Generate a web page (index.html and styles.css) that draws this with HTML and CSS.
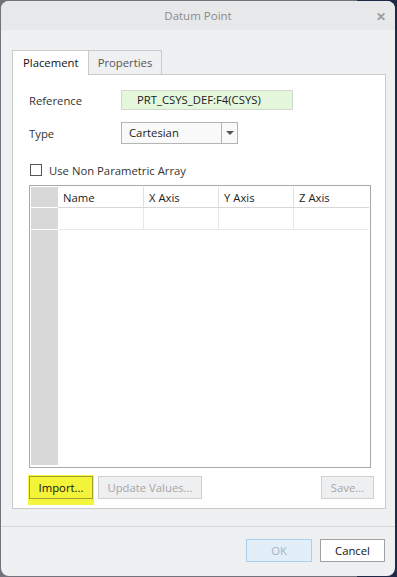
FILE: index.html
```html
<!DOCTYPE html>
<html>
<head>
    <title>Datum Point</title>
    <link rel="stylesheet" href="styles.css">
</head>
<body>
    <div class="window">
        <div class="titlebar">
            <span class="title">Datum Point</span>
            <span class="close">&#x2715;</span>
        </div>

        <div class="content">
            <div class="tabs">
                <div class="tab active">Placement</div>
                <div class="tab">Properties</div>
            </div>

            <div class="panel">
                <div class="form-row">
                    <label>Reference</label>
                    <div class="ref-field">PRT_CSYS_DEF:F4(CSYS)</div>
                </div>
                <div class="form-row type-row">
                    <label>Type</label>
                    <div class="select">
                        <span class="select-value">Cartesian</span>
                        <span class="select-arrow"></span>
                    </div>
                </div>
                <div class="check-row">
                    <span class="checkbox"></span>
                    <span>Use Non Parametric Array</span>
                </div>

                <div class="table">
                    <div class="gutter head"></div>
                    <div class="cell head">Name</div>
                    <div class="cell head">X Axis</div>
                    <div class="cell head">Y Axis</div>
                    <div class="cell head last">Z Axis</div>

                    <div class="gutter"></div>
                    <div class="cell"></div>
                    <div class="cell"></div>
                    <div class="cell"></div>
                    <div class="cell last"></div>

                    <div class="gutter rest"></div>
                    <div class="cell rest wide"></div>
                </div>

                <div class="table-actions">
                    <div class="highlight">
                        <button class="btn">Import...</button>
                    </div>
                    <button class="btn disabled">Update Values...</button>
                    <button class="btn disabled save">Save...</button>
                </div>
            </div>
        </div>

        <div class="footer">
            <button class="btn ok">OK</button>
            <button class="btn cancel">Cancel</button>
        </div>
    </div>
</body>
</html>
```

FILE: styles.css
```css
body {
    margin: 0;
    padding: 0;
    background: linear-gradient(to right, #70747a 0, #70747a 90%, #1e2a45 90%);
    font-family: "Open Sans", "Noto Sans", Arial, sans-serif;
    font-size: 11.3px;
    color: #222;
    overflow: hidden;
}

.window {
    box-sizing: border-box;
    width: 394px;
    height: 575px;
    margin: 1px 2px 1px 1px;
    background-color: #eff0f2;
    border-radius: 8px;
    display: flex;
    flex-direction: column;
    overflow: hidden;
}

.titlebar {
    height: 29px;
    flex-shrink: 0;
    background-color: #e7e8ea;
    display: flex;
    align-items: center;
    justify-content: center;
    position: relative;
}

.title {
    color: #8a8a8a;
    font-size: 11.5px;
}

.close {
    position: absolute;
    right: 9px;
    top: 7px;
    font-size: 12px;
    font-weight: bold;
    color: #9a9a9a;
}

.content {
    padding: 20px 9px 0 11px;
}

.tabs {
    display: flex;
    height: 24px;
}

.tab {
    box-sizing: border-box;
    height: 24px;
    width: 74px;
    text-align: center;
    line-height: 23px;
    border: 1px solid #cacaca;
    border-bottom: none;
    color: #555;
    background-color: #eff0f2;
    white-space: nowrap;
}

.tab.active {
    width: 76px;
    text-align: left;
    padding-left: 10px;
    color: #111;
    background-color: #fff;
    border-right: none;
    height: 25px;
    position: relative;
    z-index: 1;
}

.panel {
    box-sizing: border-box;
    height: 435px;
    background-color: #fff;
    border: 1px solid #cacaca;
    padding: 15px 15px 0 16px;
}

.form-row {
    display: flex;
    align-items: center;
    height: 20px;
}

.form-row label {
    width: 92px;
    color: #333;
}

.ref-field {
    box-sizing: border-box;
    width: 172px;
    height: 20px;
    background-color: #e4f7dd;
    border: 1px solid #cfd8cc;
    padding-left: 15px;
    line-height: 18px;
    color: #222;
}

.type-row {
    margin-top: 12px;
    height: 22px;
}

.select {
    box-sizing: border-box;
    width: 117px;
    height: 22px;
    border: 1px solid #b4b4b4;
    background-color: #f9f9f9;
    display: flex;
}

.select-value {
    flex: 1;
    padding-left: 7px;
    line-height: 20px;
}

.select-arrow {
    width: 15px;
    border-left: 1px solid #b4b4b4;
    position: relative;
}

.select-arrow::after {
    content: "";
    position: absolute;
    left: 4px;
    top: 8px;
    border-left: 4px solid transparent;
    border-right: 4px solid transparent;
    border-top: 4px solid #555;
}

.check-row {
    display: flex;
    align-items: center;
    margin-top: 19px;
    height: 14px;
    color: #333;
}

.checkbox {
    box-sizing: border-box;
    width: 12px;
    height: 12px;
    border: 1px solid #555;
    margin: 0 7px 0 1px;
    background-color: #fff;
}

.table {
    box-sizing: border-box;
    margin-top: 8px;
    width: 342px;
    height: 283px;
    border: 1px solid #a9a9a9;
    padding: 1px;
    display: grid;
    grid-template-columns: 27px 86px 75px 75px 1fr;
    grid-template-rows: 21px 22px 1fr;
}

.gutter {
    background-color: #d8d8d8;
    border-bottom: 1px solid #fff;
}

.gutter.rest {
    border-bottom: none;
    margin-bottom: 1px;
}

.cell {
    border-right: 1px solid #e8e8e8;
    border-bottom: 1px solid #e8e8e8;
    padding-left: 5px;
}

.cell.head {
    line-height: 21px;
    color: #222;
    border-bottom: 1px solid #d8d8d8;
    border-right: 1px solid #e0e0e0;
}

.cell.last {
    border-right: none;
}

.cell.wide {
    grid-column: 2 / 6;
    border: none;
}

.table-actions {
    display: flex;
    align-items: flex-start;
    margin-top: 8px;
}

.btn {
    box-sizing: border-box;
    height: 23px;
    padding: 0 6px;
    font-family: "Open Sans", "Noto Sans", Arial, sans-serif;
    font-size: 11.3px;
    color: #222;
    background-color: #fff;
    border: 1px solid #adadad;
    border-radius: 0;
    white-space: nowrap;
}

.highlight {
    background-color: #f6f53e;
    padding: 1px 1px 6px 1px;
    margin: -1px 4px 0 -1px;
}

.highlight .btn {
    width: 64px;
    background-color: #f3f33a;
    border-color: #a3a12e;
    color: #111;
}

.btn.disabled {
    color: #a6a6a6;
    background-color: #eeeff0;
    border-color: #d0d0d0;
}

.table-actions .btn.disabled {
    width: 104px;
}

.table-actions .btn.save {
    width: 53px;
    margin-left: auto;
    margin-right: -4px;
}

.footer {
    margin-top: 17px;
    border-top: 1px solid #d4d5d7;
    display: flex;
    justify-content: flex-end;
    padding: 12px 10px 0 0;
}

.btn.ok {
    width: 66px;
    height: 23px;
    margin-right: 8px;
    color: #a8b4be;
    background-color: #e2eef8;
    border-color: #a9d1ef;
}

.btn.cancel {
    width: 65px;
    height: 23px;
    color: #111;
    background-color: #fff;
    border-color: #a0a0a0;
}
```
